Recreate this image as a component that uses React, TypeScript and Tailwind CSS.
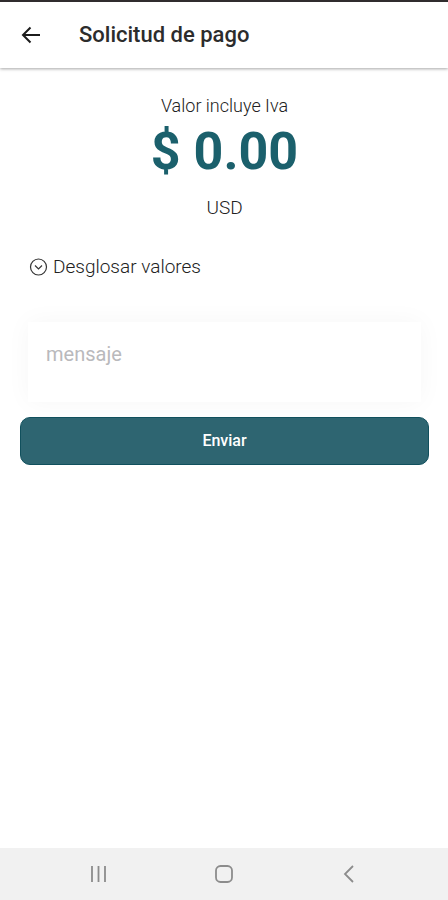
import { ReactNode } from 'react'

interface NavButtonProps {
    label: string
    children: ReactNode
}

function NavButton({ label, children }: NavButtonProps) {
    return (
        <button type="button" aria-label={label} className="flex flex-1 items-center justify-center">
            {children}
        </button>
    )
}

function Header() {
    return (
        <header className="flex h-[68px] shrink-0 items-center gap-[35px] border-t-2 border-[#302c2e] bg-white px-5 shadow-[0_1px_3px_rgba(0,0,0,0.35)]">
            <button type="button" aria-label="Volver">
                <svg className="h-6 w-6" viewBox="0 0 24 24" fill="none" stroke="#1c1c1c" strokeWidth="2">
                    <path d="M20 12H3.500M10.500 4.500L3 12l7.500 7.500" />
                </svg>
            </button>
            <h1 className="text-[22px] leading-7 font-medium text-[#2c2c2c]">Solicitud de pago</h1>
        </header>
    )
}

function Amount() {
    return (
        <section className="flex flex-col items-center pt-6">
            <p className="text-lg leading-7 font-light text-[#222222]">Valor incluye Iva</p>
            <p className="text-[52px] leading-16 font-bold text-[#1b606c]">$ 0.00</p>
            <p className="mt-2 text-[19px] leading-8 font-light text-[#222222]">USD</p>
        </section>
    )
}

export default function App() {
    return (
        <div className="flex min-h-screen flex-col bg-white font-['Roboto',sans-serif]">
            <Header />

            <main className="flex-1 pl-px">
                <Amount />

                <button type="button" className="mt-[27px] ml-7 flex items-center gap-1 text-[19px] leading-8 font-light text-[#222222]">
                    <svg className="h-5 w-5" viewBox="0 0 20 20" fill="none" stroke="#353535" strokeWidth="1.2">
                        <circle cx="9.500" cy="10" r="8" />
                        <path d="M6 8.500l3.500 3.500 3.500-3.500" />
                    </svg>
                    Desglosar valores
                </button>

                <form className="px-[19px] pt-[39px]">
                    <textarea
                        aria-label="mensaje"
                        placeholder="mensaje"
                        className="mx-2 block h-20 w-[calc(100%-16px)] resize-none bg-white px-[18px] py-5 text-xl leading-6 text-[#353535] shadow-[0_0_24px_rgba(0,0,0,0.04)] outline-none placeholder:text-[#b9b9bc]"
                    />
                    <button
                        type="button"
                        className="relative mt-[15px] h-12 w-full rounded-[10px] border border-[#11505d] bg-[#2e6571] text-base font-medium text-white"
                    >
                        Enviar
                    </button>
                </form>
            </main>

            <nav className="flex h-[52px] shrink-0 bg-[#f1f1f1] px-9">
                <NavButton label="Recientes">
                    <svg className="h-5 w-5" viewBox="0 0 20 20" fill="none" stroke="#8c8c8c" strokeWidth="1.8">
                        <path d="M3 2v16M9.500 2v16M16 2v16" />
                    </svg>
                </NavButton>
                <NavButton label="Inicio">
                    <svg className="h-5 w-5" viewBox="0 0 20 20" fill="none" stroke="#8c8c8c" strokeWidth="1.8">
                        <rect x="2" y="2" width="16" height="16" rx="4.500" />
                    </svg>
                </NavButton>
                <NavButton label="Atrás">
                    <svg className="h-5 w-5" viewBox="0 0 20 20" fill="none" stroke="#8c8c8c" strokeWidth="1.8">
                        <path d="M14 2l-8 8 8 8" />
                    </svg>
                </NavButton>
            </nav>
        </div>
    )
}
